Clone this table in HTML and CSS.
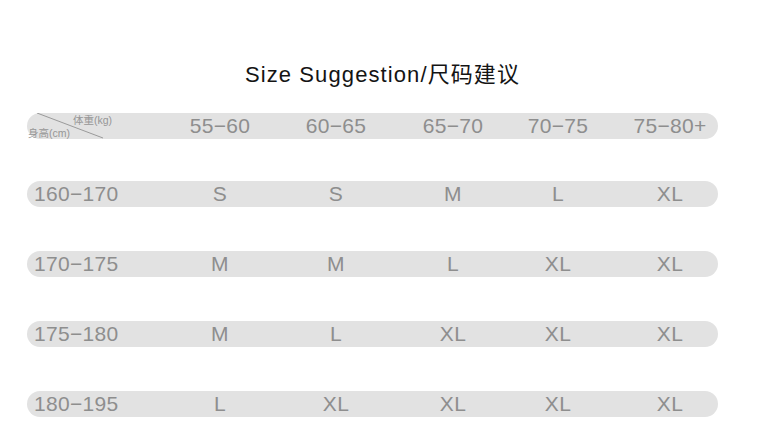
FILE: index.html
```html
<!DOCTYPE html>
<html>
<head>
<meta charset="utf-8">
<link rel="stylesheet" href="styles.css">
</head>
<body>
<div class="page">
  <h1 class="title">Size Suggestion/尺码建议</h1>
  <div class="table">
    <div class="row">
      <div class="diag">
        <svg class="diag-line" width="135" height="26" viewBox="0 0 135 26"><line x1="10" y1="0" x2="76" y2="25" stroke="#9a9a9a" stroke-width="1"/></svg>
        <span class="diag-top">体重(kg)</span>
        <span class="diag-bottom">身高(cm)</span>
      </div>
      <div class="cell">55−60</div>
      <div class="cell">60−65</div>
      <div class="cell">65−70</div>
      <div class="cell">70−75</div>
      <div class="cell">75−80+</div>
    </div>
    <div class="row">
      <div class="label">160−170</div>
      <div class="cell">S</div>
      <div class="cell">S</div>
      <div class="cell">M</div>
      <div class="cell">L</div>
      <div class="cell">XL</div>
    </div>
    <div class="row">
      <div class="label">170−175</div>
      <div class="cell">M</div>
      <div class="cell">M</div>
      <div class="cell">L</div>
      <div class="cell">XL</div>
      <div class="cell">XL</div>
    </div>
    <div class="row">
      <div class="label">175−180</div>
      <div class="cell">M</div>
      <div class="cell">L</div>
      <div class="cell">XL</div>
      <div class="cell">XL</div>
      <div class="cell">XL</div>
    </div>
    <div class="row">
      <div class="label">180−195</div>
      <div class="cell">L</div>
      <div class="cell">XL</div>
      <div class="cell">XL</div>
      <div class="cell">XL</div>
      <div class="cell">XL</div>
    </div>
  </div>
</div>
</body>
</html>
```
FILE: styles.css
```css
html, body {
  margin: 0;
  padding: 0;
  background: #ffffff;
}
body {
  font-family: "Liberation Sans", Arial, "Noto Sans CJK SC", sans-serif;
  width: 765px;
  height: 445px;
  overflow: hidden;
}
.page {
  padding-top: 62px;
}
.title {
  margin: 0;
  font-weight: normal;
  font-size: 22px;
  line-height: 25px;
  letter-spacing: 1.1px;
  color: #141414;
  text-align: center;
  font-family: "Liberation Sans", Arial, "Noto Sans CJK SC", sans-serif;
}
.table {
  margin-top: 26px;
  margin-left: 27px;
  width: 691px;
  display: flex;
  flex-direction: column;
  gap: 44px;
}
.row {
  display: grid;
  grid-template-columns: 135px 116px 116px 118px 92px 1fr;
  height: 26px;
  border-radius: 13px;
  background: #e2e2e2;
  align-items: center;
  font-size: 21px;
  line-height: 26px;
  color: #8e8e8e;
  letter-spacing: 0.3px;
}
.row:first-child {
  margin-bottom: -2px;
}
.cell {
  text-align: center;
}
.cell:last-child {
  padding-left: 18px;
}
.label {
  padding-left: 7px;
  text-align: left;
}
.diag {
  position: relative;
  height: 26px;
  display: flex;
  flex-direction: column;
  font-size: 10.5px;
  line-height: 11px;
  letter-spacing: 0;
  color: #969696;
  font-family: "Liberation Sans", "Noto Sans CJK SC", sans-serif;
}
.diag-line {
  position: absolute;
  left: 0;
  top: 0;
}
.diag-top {
  margin-top: 2px;
  margin-left: 46px;
}
.diag-bottom {
  margin-top: 2px;
  margin-left: 1px;
}
```
